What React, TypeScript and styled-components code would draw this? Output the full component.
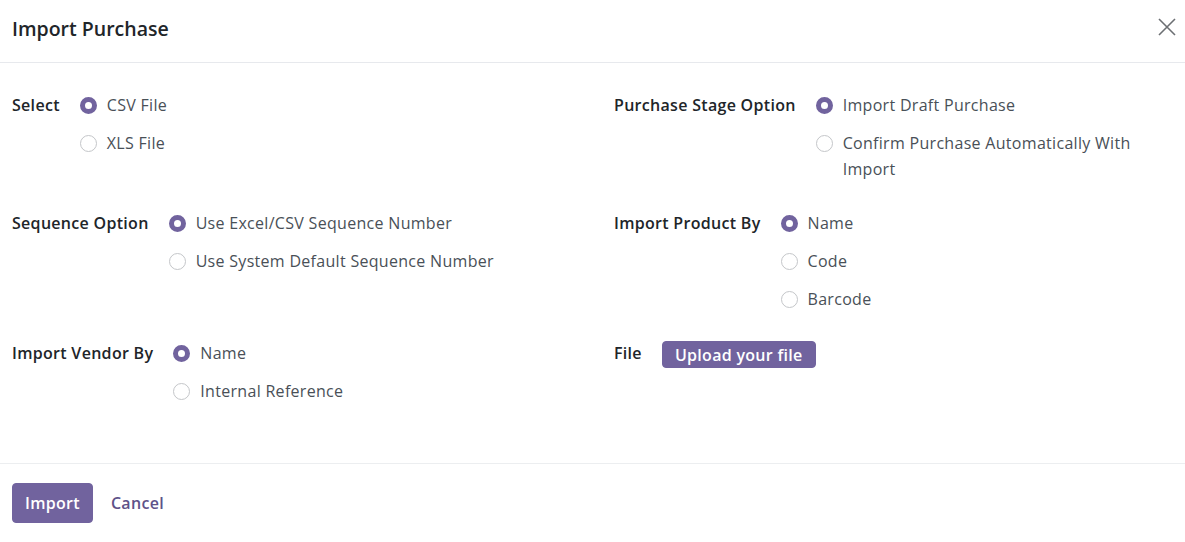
import React, { useState } from "react";
import styled, { createGlobalStyle } from "styled-components";

const GlobalStyle = createGlobalStyle`
  html, body { margin: 0; padding: 0; background: #ffffff; }
  body { font-family: "Open Sans", "Noto Sans", sans-serif; font-size: 16px; letter-spacing: 0.3px; color: #495057; }
  * { box-sizing: border-box; }
`;

const Dialog = styled.div`
  width: 1185px;
  height: 542px;
  display: flex;
  flex-direction: column;
  background: #fff;
`;

const Header = styled.div`
  height: 63px;
  display: flex;
  align-items: center;
  justify-content: space-between;
  padding: 0 6px 0 12px;
  border-bottom: 1px solid #e7e9ed;
`;

const Title = styled.h4`
  margin: 0;
  font-size: 19.5px;
  font-weight: 600;
  letter-spacing: 0;
  color: #212529;
  padding-bottom: 6px;
`;

const CloseButton = styled.button`
  width: 24px;
  height: 24px;
  border: none;
  background: transparent;
  padding: 0;
  display: flex;
  align-items: center;
  justify-content: center;
  cursor: pointer;
  margin-bottom: 8px;
`;

const Body = styled.div`
  flex: 1;
  padding: 23px 12px 0 12px;
  display: grid;
  grid-template-columns: 602px 1fr;
  grid-auto-rows: min-content;
  align-items: start;
  row-gap: 16px;
`;

const FieldRow = styled.div`
  display: flex;
  align-items: flex-start;
  gap: 20px;
`;

const Label = styled.div`
  font-weight: 600;
  color: #212529;
  line-height: 26px;
  padding: 6px 0;
  white-space: nowrap;
`;

const Options = styled.div`
  display: flex;
  flex-direction: column;
  flex: 1;
  min-width: 0;
`;

const Option = styled.label`
  display: flex;
  align-items: flex-start;
  gap: 10px;
  padding: 6px 0;
  line-height: 26px;
  cursor: pointer;
  color: #495057;
`;

const RadioCircle = styled.span<{ $checked: boolean }>`
  flex: none;
  width: 17px;
  height: 17px;
  margin-top: 5px;
  border-radius: 50%;
  border: ${(p) => (p.$checked ? "5px solid #71639e" : "1px solid #c4c6c9")};
  background: #fff;
`;

const UploadRow = styled.div`
  display: flex;
  align-items: center;
  gap: 20px;
`;

const UploadButton = styled.button`
  font-family: inherit;
  font-size: 16px;
  letter-spacing: 0.3px;
  font-weight: 600;
  color: #fff;
  background: #71639e;
  border: 1px solid #71639e;
  border-radius: 4px;
  height: 27px;
  margin-top: 3px;
  padding: 0 12px;
  line-height: 1;
  cursor: pointer;
`;

const Footer = styled.div`
  height: 79px;
  border-top: 1px solid #eceef0;
  display: flex;
  align-items: flex-start;
  gap: 5px;
  padding: 19px 12px 0 12px;
`;

const PrimaryButton = styled.button`
  font-family: inherit;
  font-size: 16px;
  letter-spacing: 0.3px;
  font-weight: 600;
  color: #fff;
  background: #71639e;
  border: 1px solid #71639e;
  border-radius: 4px;
  height: 40px;
  padding: 0 12px;
  cursor: pointer;
`;

const LinkButton = styled.button`
  font-family: inherit;
  font-size: 16px;
  letter-spacing: 0.3px;
  font-weight: 600;
  color: #5e5289;
  background: transparent;
  border: none;
  height: 40px;
  padding: 0 13px;
  cursor: pointer;
`;

type RadioFieldProps = {
  label: string;
  options: string[];
  value: string;
  onChange: (v: string) => void;
};

const RadioField: React.FC<RadioFieldProps> = ({ label, options, value, onChange }) => (
  <FieldRow>
    <Label>{label}</Label>
    <Options>
      {options.map((o) => (
        <Option key={o} onClick={() => onChange(o)}>
          <RadioCircle $checked={value === o} />
          <span>{o}</span>
        </Option>
      ))}
    </Options>
  </FieldRow>
);

export default function App() {
  const [fileType, setFileType] = useState("CSV File");
  const [stage, setStage] = useState("Import Draft Purchase");
  const [seq, setSeq] = useState("Use Excel/CSV Sequence Number");
  const [product, setProduct] = useState("Name");
  const [vendor, setVendor] = useState("Name");

  return (
    <>
      <GlobalStyle />
      <Dialog>
        <Header>
          <Title>Import Purchase</Title>
          <CloseButton aria-label="Close">
            <svg width="18" height="18" viewBox="0 0 18 18">
              <path d="M1 1 L17 17 M17 1 L1 17" stroke="#6c6f73" strokeWidth="1.6" fill="none" />
            </svg>
          </CloseButton>
        </Header>
        <Body>
          <RadioField label="Select" options={["CSV File", "XLS File"]} value={fileType} onChange={setFileType} />
          <RadioField
            label="Purchase Stage Option"
            options={["Import Draft Purchase", "Confirm Purchase Automatically With Import"]}
            value={stage}
            onChange={setStage}
          />
          <RadioField
            label="Sequence Option"
            options={["Use Excel/CSV Sequence Number", "Use System Default Sequence Number"]}
            value={seq}
            onChange={setSeq}
          />
          <RadioField
            label="Import Product By"
            options={["Name", "Code", "Barcode"]}
            value={product}
            onChange={setProduct}
          />
          <RadioField
            label="Import Vendor By"
            options={["Name", "Internal Reference"]}
            value={vendor}
            onChange={setVendor}
          />
          <UploadRow>
            <Label>File</Label>
            <UploadButton>Upload your file</UploadButton>
          </UploadRow>
        </Body>
        <Footer>
          <PrimaryButton>Import</PrimaryButton>
          <LinkButton>Cancel</LinkButton>
        </Footer>
      </Dialog>
    </>
  );
}
